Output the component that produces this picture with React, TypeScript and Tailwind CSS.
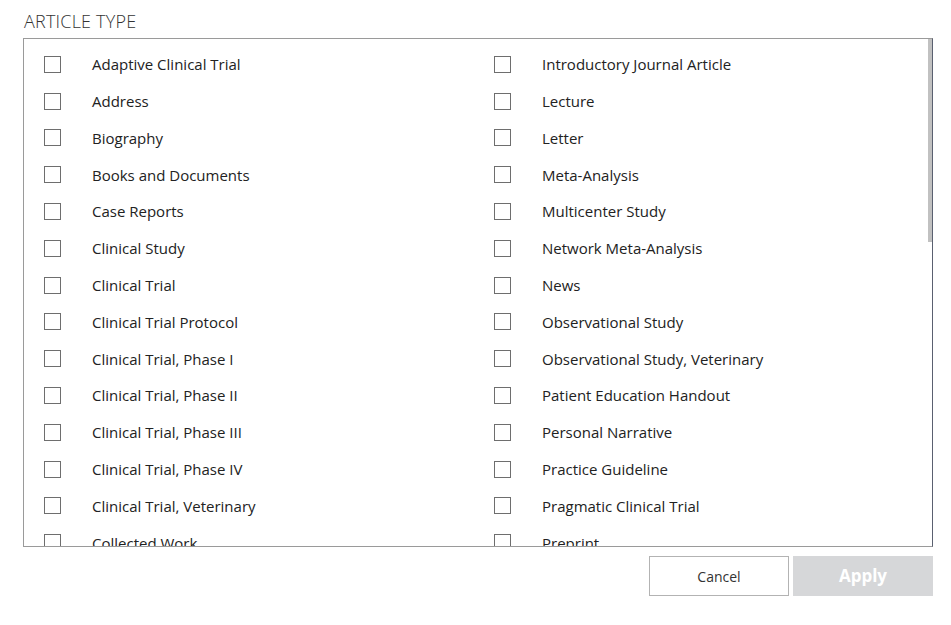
const left = [
  'Adaptive Clinical Trial',
  'Address',
  'Biography',
  'Books and Documents',
  'Case Reports',
  'Clinical Study',
  'Clinical Trial',
  'Clinical Trial Protocol',
  'Clinical Trial, Phase I',
  'Clinical Trial, Phase II',
  'Clinical Trial, Phase III',
  'Clinical Trial, Phase IV',
  'Clinical Trial, Veterinary',
  'Collected Work',
  'Comment',
  'Comparative Study',
  'Congress',
  'Consensus Development Conference',
  'Consensus Development Conference, NIH',
  'Controlled Clinical Trial',
  'Corrected and Republished Article',
  'Dataset',
  'Dictionary',
  'Directory',
  'Duplicate Publication',
  'Editorial',
  'Electronic Supplementary Materials',
  'English Abstract',
  'Equivalence Trial',
  'Evaluation Study',
  'Expression of Concern',
  'Festschrift',
  'Government Publication',
  'Guideline',
];

const right = [
  'Introductory Journal Article',
  'Lecture',
  'Letter',
  'Meta-Analysis',
  'Multicenter Study',
  'Network Meta-Analysis',
  'News',
  'Observational Study',
  'Observational Study, Veterinary',
  'Patient Education Handout',
  'Personal Narrative',
  'Practice Guideline',
  'Pragmatic Clinical Trial',
  'Preprint',
  'Published Erratum',
  'Randomized Controlled Trial',
  'Randomized Controlled Trial, Veterinary',
  'Research Support, N.I.H., Extramural',
  'Research Support, N.I.H., Intramural',
  "Research Support, Non-U.S. Gov't",
  "Research Support, U.S. Gov't, P.H.S.",
  'Retracted Publication',
  'Retraction of Publication',
  'Review',
  'Scientific Integrity Review',
  'Systematic Review',
  'Technical Report',
  'Twin Study',
  'Validation Study',
  'Video-Audio Media',
  'Webcast',
  'Historical Article',
  'Interactive Tutorial',
  'Interview',
];

const Row = ({ label }: { label: string }) => (
  <label className="flex items-center h-[36.8px] cursor-pointer">
    <input type="checkbox" className="hidden" />
    <span className="w-[17px] h-[17px] border border-[#6e6e6e] bg-white shrink-0" />
    <span className="ml-[31px] text-[15px] text-[#222] whitespace-nowrap">{label}</span>
  </label>
);

const App = () => {
  return (
    <div className="w-[951px] h-[625px] bg-white font-['Open_Sans','Noto_Sans',sans-serif]">
      <div className="pl-[23px] pr-[18px] pt-[9px]">
        <h2 className="pl-[1px] text-[18px] leading-[24px] font-light text-[#333] tracking-[0.2px]">ARTICLE TYPE</h2>

        {/* list */}
        <div className="relative mt-[5px] h-[509px] border border-[#9a9a9a] border-r-[#5a6070] overflow-hidden">
          <div className="flex pl-[20px] pt-[7px] pb-[6px]">
            <div className="w-[450px] shrink-0 flex flex-col">
              {left.map((l) => (
                <Row key={l} label={l} />
              ))}
            </div>
            <div className="flex flex-col">
              {right.map((l) => (
                <Row key={l} label={l} />
              ))}
            </div>
          </div>
          {/* scrollbar thumb */}
          <div className="absolute right-0 top-0 w-[4px] h-[203px] bg-[#c1c1c1]" />
        </div>

        {/* buttons */}
        <div className="flex justify-end gap-[4px] mt-[9px]">
          <button className="w-[140px] h-[40px] border border-[#b3b3b3] bg-white text-[14px] text-[#333]">
            Cancel
          </button>
          <button disabled className="w-[140px] h-[40px] bg-[#d6d7d9] text-[17px] font-bold text-white">
            Apply
          </button>
        </div>
      </div>
    </div>
  );
};

export default App;
